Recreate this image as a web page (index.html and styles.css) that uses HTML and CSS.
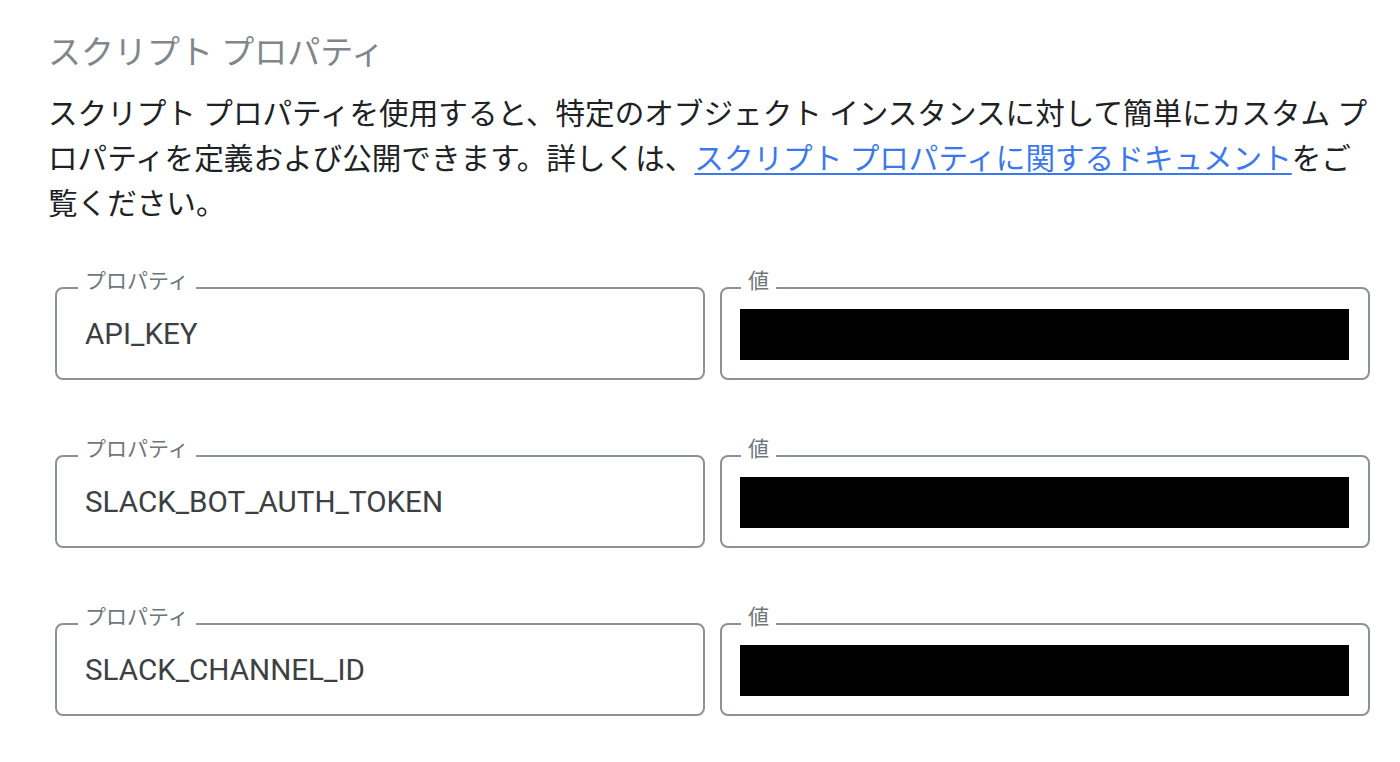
FILE: index.html
```html
<!DOCTYPE html>
<html lang="ja">
<head>
<meta charset="utf-8">
<title>スクリプト プロパティ</title>
<link rel="stylesheet" href="styles.css">
</head>
<body>
<main class="page">
  <h2 class="title">スクリプト プロパティ</h2>
  <p class="desc">スクリプト プロパティを使用すると、特定のオブジェクト インスタンスに対して簡単にカスタム プロパティを定義および公開できます。詳しくは、<a class="link" href="#">スクリプト プロパティに関するドキュメント</a>をご覧ください。</p>
  <div class="fields">
    <div class="row">
      <div class="field key"><span class="label">プロパティ</span><span class="value">API_KEY</span></div>
      <div class="field val"><span class="label">値</span><span class="mask"></span></div>
    </div>
    <div class="row">
      <div class="field key"><span class="label">プロパティ</span><span class="value">SLACK_BOT_AUTH_TOKEN</span></div>
      <div class="field val"><span class="label">値</span><span class="mask"></span></div>
    </div>
    <div class="row">
      <div class="field key"><span class="label">プロパティ</span><span class="value">SLACK_CHANNEL_ID</span></div>
      <div class="field val"><span class="label">値</span><span class="mask"></span></div>
    </div>
  </div>
</main>
</body>
</html>
```
FILE: styles.css
```css
html, body {
  margin: 0;
  padding: 0;
  background: #ffffff;
}
body {
  font-family: Roboto, "Noto Sans CJK JP", sans-serif;
  color: #202124;
}
.page {
  padding: 33px 0 0 48px;
}
.title {
  margin: 0;
  font-size: 33px;
  line-height: 40px;
  font-weight: 400;
  color: #80868b;
}
.desc {
  margin: 19px 0 0 0;
  width: 1332px;
  font-size: 29.6px;
  line-height: 45px;
  color: #202124;
}
.link {
  color: #3b78ef;
  text-decoration: underline;
  text-decoration-thickness: 2px;
  text-underline-offset: 4px;
}
.fields {
  margin: 60px 0 0 7px;
  display: flex;
  flex-direction: column;
  gap: 75px;
}
.row {
  display: flex;
  gap: 15px;
}
.field {
  position: relative;
  box-sizing: border-box;
  width: 650px;
  height: 93px;
  border: 2px solid #8d9297;
  border-radius: 8px;
  display: flex;
  align-items: center;
}
.key {
  padding: 0 0 0 28px;
}
.val {
  padding: 2px 19px 0 18px;
}
.label {
  position: absolute;
  top: -20px;
  left: 21px;
  padding: 0 7px;
  background: #ffffff;
  font-size: 21px;
  line-height: 24px;
  color: #70757a;
}
.val .label {
  left: 19px;
}
.value {
  font-size: 29.6px;
  line-height: 36px;
  color: #3c4043;
}
.mask {
  display: block;
  width: 100%;
  height: 51px;
  background: #000000;
}
```
